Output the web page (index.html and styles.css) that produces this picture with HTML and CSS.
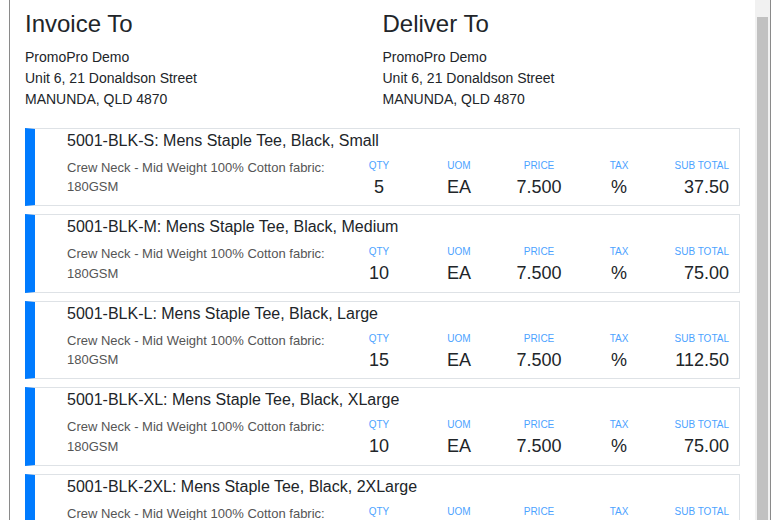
FILE: index.html
```html
<!DOCTYPE html>
<html lang="en">
<head>
<meta charset="UTF-8" />
<meta name="viewport" content="width=device-width, initial-scale=1"/>
<title>Invoice</title>
<link rel="stylesheet" href="styles.css">
</head>
<body>

<div class="panel">
  <div class="content">

    <!-- Addresses -->
    <div class="addresses">
      <div class="address">
        <h4>Invoice To</h4>
        <p>PromoPro Demo<br>Unit 6, 21 Donaldson Street<br>MANUNDA, QLD 4870</p>
      </div>
      <div class="address">
        <h4>Deliver To</h4>
        <p>PromoPro Demo<br>Unit 6, 21 Donaldson Street<br>MANUNDA, QLD 4870</p>
      </div>
    </div>

    <!-- Lines -->
    <div class="item">
      <div class="item-title">5001-BLK-S: Mens Staple Tee, Black, Small</div>
      <div class="item-row">
        <div class="item-desc">Crew Neck - Mid Weight 100% Cotton fabric: 180GSM</div>
        <div class="col"><span class="label">QTY</span><span class="value">5</span></div>
        <div class="col"><span class="label">UOM</span><span class="value">EA</span></div>
        <div class="col"><span class="label">PRICE</span><span class="value">7.500</span></div>
        <div class="col"><span class="label">TAX</span><span class="value">%</span></div>
        <div class="col total"><span class="label">SUB TOTAL</span><span class="value">37.50</span></div>
      </div>
    </div>

    <div class="item">
      <div class="item-title">5001-BLK-M: Mens Staple Tee, Black, Medium</div>
      <div class="item-row">
        <div class="item-desc">Crew Neck - Mid Weight 100% Cotton fabric: 180GSM</div>
        <div class="col"><span class="label">QTY</span><span class="value">10</span></div>
        <div class="col"><span class="label">UOM</span><span class="value">EA</span></div>
        <div class="col"><span class="label">PRICE</span><span class="value">7.500</span></div>
        <div class="col"><span class="label">TAX</span><span class="value">%</span></div>
        <div class="col total"><span class="label">SUB TOTAL</span><span class="value">75.00</span></div>
      </div>
    </div>

    <div class="item">
      <div class="item-title">5001-BLK-L: Mens Staple Tee, Black, Large</div>
      <div class="item-row">
        <div class="item-desc">Crew Neck - Mid Weight 100% Cotton fabric: 180GSM</div>
        <div class="col"><span class="label">QTY</span><span class="value">15</span></div>
        <div class="col"><span class="label">UOM</span><span class="value">EA</span></div>
        <div class="col"><span class="label">PRICE</span><span class="value">7.500</span></div>
        <div class="col"><span class="label">TAX</span><span class="value">%</span></div>
        <div class="col total"><span class="label">SUB TOTAL</span><span class="value">112.50</span></div>
      </div>
    </div>

    <div class="item">
      <div class="item-title">5001-BLK-XL: Mens Staple Tee, Black, XLarge</div>
      <div class="item-row">
        <div class="item-desc">Crew Neck - Mid Weight 100% Cotton fabric: 180GSM</div>
        <div class="col"><span class="label">QTY</span><span class="value">10</span></div>
        <div class="col"><span class="label">UOM</span><span class="value">EA</span></div>
        <div class="col"><span class="label">PRICE</span><span class="value">7.500</span></div>
        <div class="col"><span class="label">TAX</span><span class="value">%</span></div>
        <div class="col total"><span class="label">SUB TOTAL</span><span class="value">75.00</span></div>
      </div>
    </div>

    <div class="item">
      <div class="item-title">5001-BLK-2XL: Mens Staple Tee, Black, 2XLarge</div>
      <div class="item-row">
        <div class="item-desc">Crew Neck - Mid Weight 100% Cotton fabric: 180GSM</div>
        <div class="col"><span class="label">QTY</span><span class="value">5</span></div>
        <div class="col"><span class="label">UOM</span><span class="value">EA</span></div>
        <div class="col"><span class="label">PRICE</span><span class="value">7.500</span></div>
        <div class="col"><span class="label">TAX</span><span class="value">%</span></div>
        <div class="col total"><span class="label">SUB TOTAL</span><span class="value">37.50</span></div>
      </div>
    </div>

  </div>

  <!-- Полоса прокрутки -->
  <div class="scrollbar">
    <div class="thumb"></div>
  </div>
</div>

</body>
</html>
```
FILE: styles.css
```css
* {
    margin: 0;
    padding: 0;
    box-sizing: border-box;
}

body {
    font-family: "Liberation Sans", Arial, sans-serif;
    color: #212529;
    background: #fff;
    overflow: hidden;
}

/* Panel */
.panel {
    margin-left: 9px;
    width: 762px;
    height: 520px;
    border-left: 1px solid #8a8a8a;
    border-right: 1px solid #8a8a8a;
    display: flex;
}

.content {
    flex: 1;
    overflow: hidden;
    padding: 10px 15px 0 15px;
}

/* Scrollbar */
.scrollbar {
    width: 15px;
    flex-shrink: 0;
    background: #f1f1f1;
    padding: 17px 2px 0;
}
.thumb {
    height: 100%;
    background: #c1c1c1;
}

/* Addresses */
.addresses {
    display: flex;
    margin-bottom: 18px;
}
.address {
    flex: 1;
}
.address h4 {
    font-size: 24px;
    font-weight: 400;
    line-height: 1.2;
    margin-bottom: 8px;
}
.address p {
    font-size: 14px;
    line-height: 21px;
}

/* Line items */
.item {
    border: 1px solid #dee2e6;
    border-left: 10px solid #007bff;
    padding: 0 0 7.5px 32px;
    margin-bottom: 8px;
}
.item-title {
    font-size: 16px;
    line-height: 24px;
}
.item-row {
    display: flex;
    margin-top: 5px;
}
.item-desc {
    flex: 1;
    font-size: 13px;
    line-height: 19.5px;
    color: #555;
    padding-right: 10px;
}
.col {
    width: 80px;
    flex-shrink: 0;
    display: flex;
    flex-direction: column;
    align-items: center;
}
.col.total {
    align-items: flex-end;
    padding-right: 10px;
}
.label {
    font-size: 10px;
    line-height: 15px;
    color: #4da3ff;
    margin-bottom: 3px;
}
.value {
    font-size: 18px;
    line-height: 22px;
}
```
